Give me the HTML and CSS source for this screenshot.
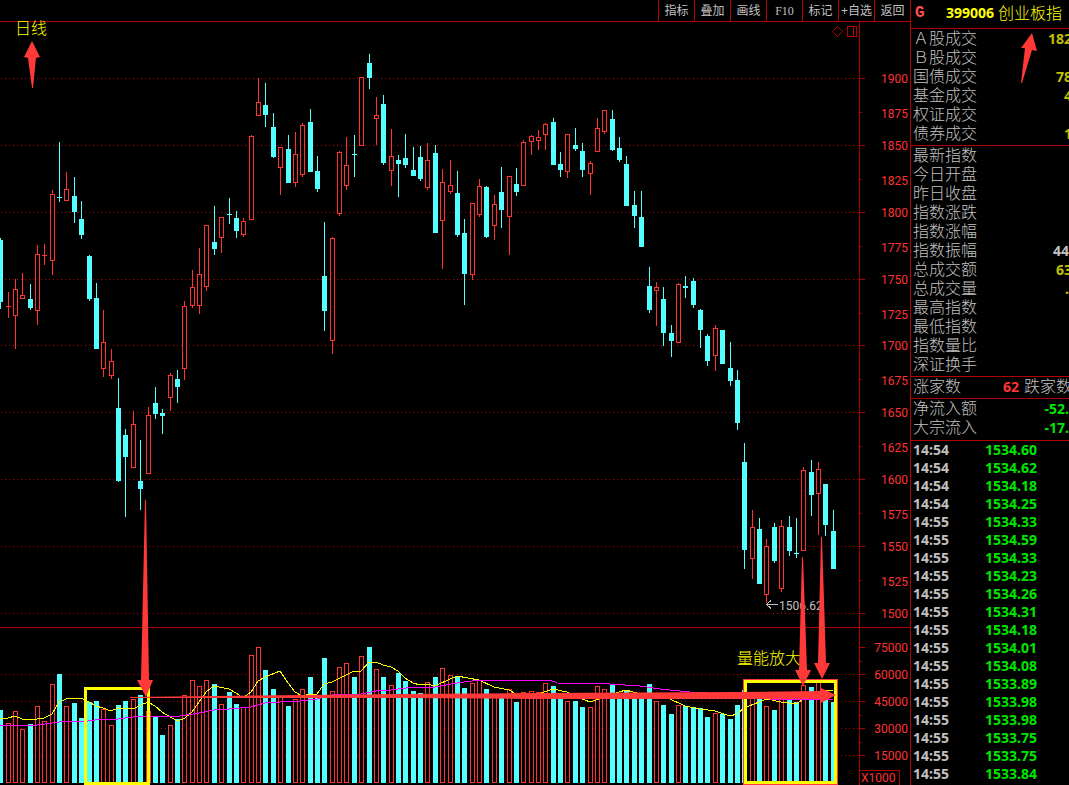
FILE: index.html
```html
<!DOCTYPE html>
<html lang="zh-CN">
<head>
<meta charset="utf-8">
<title>创业板指 399006</title>
<link rel="stylesheet" href="styles.css">
</head>
<body>
<div class="terminal">
  <main class="main">
    <nav class="toolbar">
      <button type="button">指标</button>
      <button type="button">叠加</button>
      <button type="button">画线</button>
      <button type="button" class="latin">F10</button>
      <button type="button">标记</button>
      <button type="button">+自选</button>
      <button type="button">返回</button>
    </nav>
    <svg class="chart" viewBox="0 22 910 763" preserveAspectRatio="xMinYMin meet" role="img" aria-label="日线">
      <g id="grid" class="grid"></g>
      <g class="frame">
        <path d="M0 627.5H910M859.5 22V785M859.5 785V770.5H899.5V785"/>
        <path id="ticks"/>
        <path d="M847.5 26.5h9v10h-9zM853.5 26.5v10"/>
        <path class="smooth" d="M837.5 26.5l5 5-5 5-5-5z"/>
      </g>
      <g id="labels" class="labels"></g>
      <text class="labels-unit" x="861" y="782">X1000</text>
      <g id="candles"></g>
      <g id="volumes"></g>
      <polyline id="ma5" class="ma5"/>
      <polyline id="ma10" class="ma10"/>
      <g class="low">
        <path d="M766 604.5H778M771 600.5L766.500 604.5L771 608.5"/>
        <text x="779" y="610">1506.62</text>
      </g>
      <g class="note">
        <text x="15" y="34">日线</text>
        <text x="737" y="664">量能放大</text>
      </g>
      <rect class="zone" x="85.500" y="688.5" width="63" height="95"/>
      <rect class="zone-edge" x="743.500" y="679.5" width="94" height="105"/>
      <rect class="zone" x="745.500" y="681.5" width="90" height="101"/>
      <g class="arrow">
        <path d="M32 41L40 57L36 58L33 88H32L28 58L24 57Z"/>
        <path d="M145 500H146L149 680H153L146 697L137 680H141Z"/>
        <path d="M802 557H803L807 670H811L803 686L795 670H799Z"/>
        <path d="M821 537H822L826 663H830L822 679L814 663H818Z"/>
        <path d="M130 697L400 694L530 693L735 692L821 691V688L836 695L821 703V699L530 699L400 698L130 698Z"/>
      </g>
    </svg>
  </main>
  <aside class="side">
    <header class="title"><b class="flag">G</b><b class="code">399006</b><span>创业板指</span></header>
    <dl class="group">
      <div><dt>Ａ股成交</dt><dd>182</dd></div>
      <div><dt>Ｂ股成交</dt><dd></dd></div>
      <div><dt>国债成交</dt><dd>78</dd></div>
      <div><dt>基金成交</dt><dd>4</dd></div>
      <div><dt>权证成交</dt><dd></dd></div>
      <div><dt>债券成交</dt><dd>1</dd></div>
    </dl>
    <dl class="group">
      <div><dt>最新指数</dt><dd></dd></div>
      <div><dt>今日开盘</dt><dd></dd></div>
      <div><dt>昨日收盘</dt><dd></dd></div>
      <div><dt>指数涨跌</dt><dd></dd></div>
      <div><dt>指数涨幅</dt><dd></dd></div>
      <div><dt>指数振幅</dt><dd class="plain inset">44</dd></div>
      <div><dt>总成交额</dt><dd>63</dd></div>
      <div><dt>总成交量</dt><dd class="inset">.</dd></div>
      <div><dt>最高指数</dt><dd></dd></div>
      <div><dt>最低指数</dt><dd></dd></div>
      <div><dt>指数量比</dt><dd></dd></div>
      <div><dt>深证换手</dt><dd></dd></div>
    </dl>
    <dl class="group">
      <div><dt>涨家数</dt><dd class="up">62</dd><dt class="second">跌家数</dt></div>
    </dl>
    <dl class="group flow">
      <div><dt>净流入额</dt><dd class="down inset">-52.</dd></div>
      <div><dt>大宗流入</dt><dd class="down inset">-17.</dd></div>
    </dl>
    <table class="trades">
      <tbody>
        <tr><td>14:54</td><td>1534.60</td></tr>
        <tr><td>14:54</td><td>1534.62</td></tr>
        <tr><td>14:54</td><td>1534.18</td></tr>
        <tr><td>14:54</td><td>1534.25</td></tr>
        <tr><td>14:55</td><td>1534.33</td></tr>
        <tr><td>14:55</td><td>1534.59</td></tr>
        <tr><td>14:55</td><td>1534.33</td></tr>
        <tr><td>14:55</td><td>1534.23</td></tr>
        <tr><td>14:55</td><td>1534.26</td></tr>
        <tr><td>14:55</td><td>1534.31</td></tr>
        <tr><td>14:55</td><td>1534.18</td></tr>
        <tr><td>14:55</td><td>1534.01</td></tr>
        <tr><td>14:55</td><td>1534.08</td></tr>
        <tr><td>14:55</td><td>1533.89</td></tr>
        <tr><td>14:55</td><td>1533.98</td></tr>
        <tr><td>14:55</td><td>1533.98</td></tr>
        <tr><td>14:55</td><td>1533.75</td></tr>
        <tr><td>14:55</td><td>1533.75</td></tr>
        <tr><td>14:55</td><td>1533.84</td></tr>
      </tbody>
    </table>
    <svg class="pointer" viewBox="0 0 18 52" aria-hidden="true"><path d="M12 0L17 18L12 17L2 50H1L5 15H1Z"/></svg>
  </aside>
</div>
<script src="chart.js"></script>
</body>
</html>
```

FILE: styles.css
```css
* { box-sizing: border-box; }

body {
  margin: 0;
  background: #000;
  color: #c0c0c0;
  font-family: "Noto Sans", "Noto Sans CJK SC", sans-serif;
}

.terminal {
  display: grid;
  grid-template-columns: minmax(0, 1fr) 159px;
  min-height: 100vh;
  overflow: hidden;
}

.main {
  display: flex;
  flex-direction: column;
  min-width: 0;
}

.toolbar {
  display: flex;
  justify-content: flex-end;
  height: 22px;
  border-bottom: 1px solid #b00000;
}

.toolbar button {
  width: 36px;
  padding: 0;
  border: 0;
  border-left: 1px solid #b00000;
  background: none;
  color: #c0c0c0;
  font: 12px/20px "Liberation Sans", "Noto Sans CJK SC", sans-serif;
  white-space: nowrap;
}

.toolbar .latin { font-family: "Liberation Serif", serif; }

.chart {
  display: block;
  width: 100%;
  height: auto;
  overflow: visible;
  shape-rendering: crispEdges;
}

.grid { stroke: #b00000; stroke-dasharray: 1 3; }
.frame { fill: none; stroke: #b00000; }
.smooth { shape-rendering: geometricPrecision; }

.labels, .labels-unit {
  fill: #ff3232;
  font: 12px Roboto, sans-serif;
}
.labels { text-anchor: end; }

.up-bar { fill: #000; stroke: #ff3232; }
.up-wick { stroke: #ff3232; }
.down-bar { fill: #54ffff; stroke: none; }
.down-wick { stroke: #54ffff; }

.ma5, .ma10 { fill: none; }
.ma5 { stroke: #ffff00; }
.ma10 { stroke: #ff00ff; }

.low path { fill: none; stroke: #c0c0c0; }
.low text { fill: #c0c0c0; font: 12px Roboto, sans-serif; }

.note {
  fill: #ffff00;
  font: 300 16px "Liberation Sans", "Noto Sans CJK SC", sans-serif;
}

.zone { fill: none; stroke: #ffff00; stroke-width: 3; }
.zone-edge { fill: none; stroke: #ff3838; }
.arrow { fill: #ff3838; shape-rendering: geometricPrecision; }

.side {
  position: relative;
  border-left: 1px solid #b00000;
  overflow: hidden;
  font-size: 16px;
}

.title {
  display: flex;
  align-items: center;
  height: 29px;
  padding: 0 0 2px 4px;
  border-bottom: 1px solid #b00000;
  color: #ffff00;
  font-weight: 300;
  line-height: 24px;
  white-space: nowrap;
}

.title .flag {
  width: 31px;
  color: #ff5050;
  font: bold 16px/24px "Liberation Mono", monospace;
}

.title .code { width: 52px; font-size: 14px; font-weight: bold; }

.group {
  margin: 0;
  padding: 1px 0 1px 2px;
  border-bottom: 1px solid #b00000;
}
.group.flow { padding-bottom: 2px; }

.group div {
  display: flex;
  height: 19px;
  line-height: 17px;
  margin-right: -3px;
  white-space: nowrap;
}

.group dt {
  font-family: "Liberation Sans", "Noto Sans CJK SC", sans-serif;
  font-weight: 300;
}

.group dd {
  flex: 1;
  margin: 0;
  color: #c0c000;
  font-size: 14px;
  font-weight: bold;
  text-align: right;
}

.group .plain { color: #c0c0c0; }
.group .inset { padding-right: 3px; }
.group .up { color: #ff3232; }
.group .down { color: #00e600; }
.group .second { margin-left: 5px; }

.trades {
  border-collapse: collapse;
  font-size: 14px;
  font-weight: bold;
}

.trades td {
  height: 18px;
  padding: 0 0 0 2px;
  line-height: 18px;
}
.trades td:first-child { width: 72px; }
.trades td + td { color: #00e600; }

.pointer {
  position: absolute;
  top: 33px;
  right: 31px;
  width: 18px;
  fill: #ff3838;
}
```

FILE: chart.js
```js
// Each candle: x, high, body top, body bottom, low, direction (1 up, 0 down), volume top
const candles = [
  [0,238,240,302,309,0,710],[8,292,306,307,318,1,723],[15,279,289,316,349,1,711],[22,273,295,299,299,1,729],
  [30,284,299,308,310,0,724],[37,245,254,311,325,1,706],[44,244,255,256,265,1,721],[52,190,194,261,275,1,684],
  [59,142,197,198,202,0,674],[66,172,189,201,201,1,706],[74,177,196,212,223,0,703],[81,201,219,235,239,0,718],
  [89,255,256,299,301,0,702],[96,283,298,349,349,0,701],[103,310,342,369,377,1,709],[111,349,361,376,379,1,725],
  [118,378,408,481,482,0,705],[125,429,435,457,517,0,701],[133,411,424,468,468,1,699],[140,440,481,489,510,0,695],
  [148,407,415,474,474,1,711],[155,387,403,414,419,0,716],[162,409,413,416,434,0,735],[170,373,375,398,411,1,725],
  [177,370,379,387,403,0,719],[184,301,306,369,380,1,695],[192,270,287,306,308,1,680],[199,248,274,306,314,1,686],
  [206,225,225,287,291,1,680],[214,206,242,249,255,0,684],[221,217,217,238,253,1,704],[229,198,214,215,224,0,692],
  [236,211,218,231,238,0,704],[243,218,221,235,237,1,707],[251,135,136,220,220,1,655],[258,78,102,116,116,1,647],
  [265,83,105,115,127,0,670],[273,113,127,157,158,0,689],[280,147,147,168,195,1,697],[288,135,149,183,183,0,706],
  [295,132,154,183,187,1,699],[302,123,125,175,177,1,689],[310,109,122,172,172,0,677],[317,156,171,189,192,0,698],
  [324,222,276,311,331,0,658],[332,237,238,341,354,1,691],[339,151,152,214,216,1,667],[346,137,165,186,190,1,663],
  [354,135,154,155,177,0,677],[361,77,77,146,146,1,656],[369,54,63,78,89,0,647],[376,97,115,119,145,1,669],
  [383,95,104,163,165,0,677],[391,129,156,171,186,1,685],[398,155,160,164,197,0,673],[405,134,158,165,168,0,681],
  [413,147,170,176,176,0,691],[420,146,157,179,181,0,693],[427,143,160,188,190,1,682],[435,145,153,233,233,0,677],
  [442,169,182,221,269,1,668],[450,160,185,192,194,1,675],[457,171,193,235,237,0,676],[464,219,233,274,305,0,688],
  [472,203,203,275,280,1,683],[479,179,186,215,217,1,680],[486,186,187,237,238,0,689],[494,195,204,226,240,1,697],
  [501,167,192,210,228,0,697],[509,176,176,217,255,1,689],[516,168,184,192,196,0,702],[523,140,142,186,186,1,692],
  [531,135,136,142,155,1,691],[538,130,137,141,150,1,692],[545,123,124,135,150,1,683],[553,118,122,165,165,0,686],
  [560,152,164,170,177,0,697],[567,134,134,172,178,1,701],[575,128,145,149,151,0,701],[582,143,151,170,177,0,707],
  [590,161,163,174,195,1,707],[597,118,128,152,152,1,686],[604,110,110,132,134,1,689],[612,110,119,150,151,0,685],
  [619,137,148,160,162,0,697],[626,156,164,206,206,0,690],[634,191,205,216,228,0,694],[641,191,217,247,247,0,695],
  [649,267,286,310,313,0,684],[656,282,287,291,326,1,701],[663,287,299,333,346,0,705],[671,325,333,341,357,0,714],
  [678,283,284,343,343,1,705],[685,276,286,288,298,0,706],[693,278,281,305,308,0,707],[700,309,310,330,348,0,708],
  [707,334,336,361,366,0,717],[715,325,328,356,371,1,713],[722,330,330,364,364,0,714],[730,342,368,381,386,0,719],
  [737,370,380,423,430,0,705],[744,443,462,550,569,0,690],[752,510,527,559,579,1,694],[759,518,529,584,584,0,698],
  [766,539,546,595,603,1,706],[774,523,527,561,563,0,710],[781,520,526,589,592,1,698],[789,516,527,551,556,0,700],
  [796,518,553,554,558,0,702],[803,467,470,551,551,1,685],[811,460,472,495,516,0,687],[818,462,469,494,535,1,682],
  [825,484,484,525,536,0,698],[833,510,531,569,569,0,702]
];

const ma5 = "0,719 8,718 15,716 22,719 30,720 44,718 52,714 59,702 66,699 81,698 89,702 96,706 103,708 111,711 118,708 135,708 141,705 148,702 155,706 162,712 170,717 178,721 185,718 192,712 199,702 206,692 214,686 229,689 236,693 243,698 251,692 258,681 265,677 280,671 288,683 295,692 302,696 310,694 317,694 324,684 332,682 346,675 354,671 361,671 369,662 376,662 383,665 391,667 398,671 405,678 413,683 420,685 427,684 435,686 450,679 457,676 479,680 494,687 509,690 516,694 531,696 538,694 553,689 567,692 575,696 590,702 605,697 619,692 626,690 640,694 655,694 668,698 685,706 700,709 715,711 730,716 737,714 744,708 759,702 767,699 781,702 796,704 805,698 818,692 833,690";
const ma10 = "0,725 15,725 30,726 52,723 66,721 88,721 103,719 118,719 133,717 148,716 180,716 199,713 214,710 229,709 251,707 265,703 280,702 300,701 317,699 332,695 361,694 376,691 391,690 413,687 435,687 457,683 479,680 550,680 557,683 610,684 640,686 660,689 690,692 725,694 770,699 805,700 818,699 833,699";

const priceRows = [78, 145, 212, 279, 345, 412, 479, 546, 613];
const volumeRows = [647, 674, 701, 728, 755];
const VOLUME_BASE = 783;

const byId = id => document.getElementById(id);

function bar(x, top, bottom, up) {
  return up
    ? `<rect class="up-bar" x="${x - 1.5}" y="${top + 0.5}" width="4" height="${bottom - top - 1}"/>`
    : `<rect class="down-bar" x="${x - 2}" y="${top}" width="5" height="${bottom - top}"/>`;
}

byId("candles").innerHTML = candles.map(([x, high, top, bottom, low, up]) => {
  const kind = up ? "up" : "down";
  const wick = `<path class="${kind}-wick" d="M${x + 0.5} ${high}V${low}"/>`;
  const body = bottom - top === 1
    ? `<path class="${kind}-wick" d="M${x - 2} ${top + 0.5}h5"/>`
    : bar(x, top, bottom, up);
  return wick + body;
}).join("");

byId("volumes").innerHTML = candles.map(c => bar(c[0], c[6], VOLUME_BASE, c[5])).join("");
byId("ma5").setAttribute("points", ma5);
byId("ma10").setAttribute("points", ma10);

byId("grid").innerHTML = priceRows.concat(volumeRows.slice(1))
  .map(y => `<path d="M1 ${y + 0.5}H858"/>`).join("");

let ticks = "";
let labels = "";
const label = (y, value) => `<text x="908" y="${y + 5}">${value}</text>`;
priceRows.forEach((y, i) => {
  ticks += `M860 ${y + 0.5}h5`;
  labels += label(y, 1900 - i * 50);
  if (i < priceRows.length - 1) {
    ticks += `M860 ${y + 34.5}h2`;
    labels += label(y + 35, 1875 - i * 50);
  }
});
volumeRows.forEach((y, i) => {
  ticks += `M860 ${y + 0.5}h5`;
  if (i < volumeRows.length - 1) ticks += `M860 ${y + 14.5}h2`;
  labels += label(y, 75000 - i * 15000);
});
byId("ticks").setAttribute("d", ticks);
byId("labels").innerHTML = labels;
```
